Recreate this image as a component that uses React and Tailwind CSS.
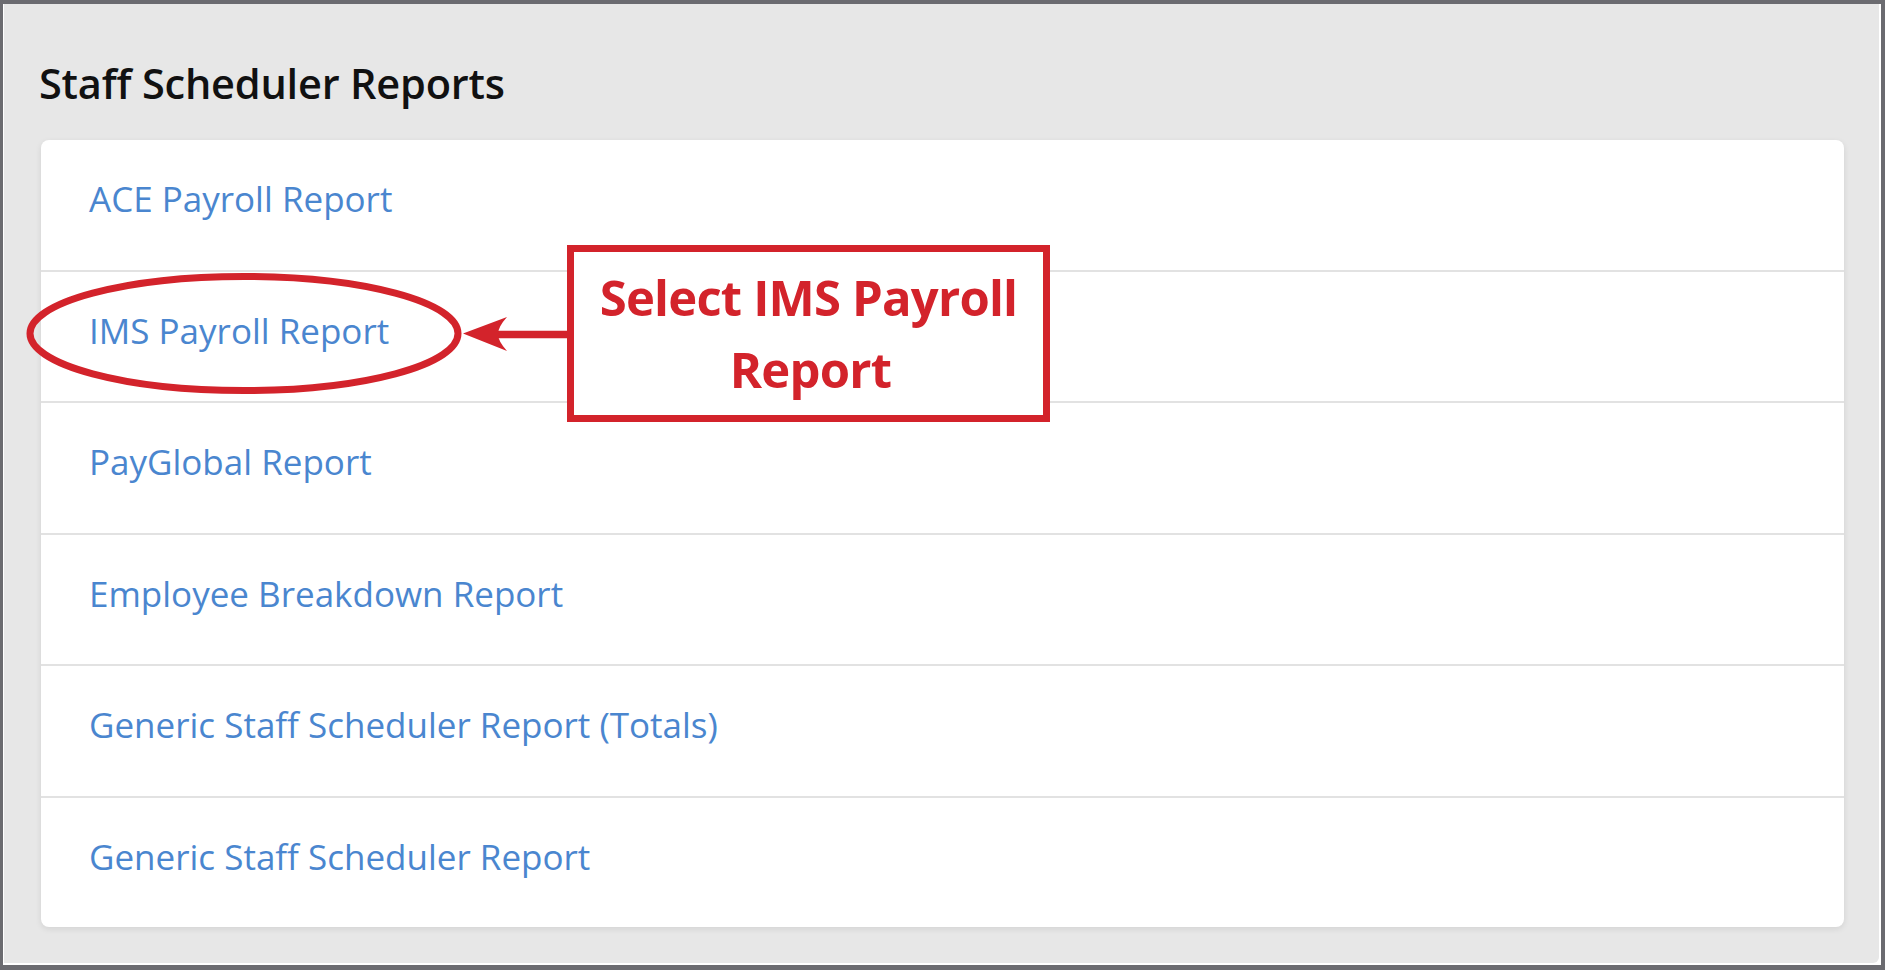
import React from "react";

const reports = [
  "ACE Payroll Report",
  "IMS Payroll Report",
  "PayGlobal Report",
  "Employee Breakdown Report",
  "Generic Staff Scheduler Report (Totals)",
  "Generic Staff Scheduler Report",
];

export default function App() {
  return (
    <div
      className="relative w-[1885px] h-[970px] bg-[#6b6b70] pt-[4px] pl-[3px] pr-[4px] pb-[5px] overflow-hidden"
      style={{ fontFamily: "'Open Sans', 'Noto Sans', sans-serif" }}
    >
      <div className="h-full bg-white pl-[1px] pr-[2px] pb-[2px]">
        <div className="h-full bg-[#e7e7e7] rounded-br-[6px] pl-[35px] pr-[35px] flex flex-col">
          <h1 className="mt-[55px] text-[41.5px] leading-[48px] font-semibold text-[#111] tracking-[-0.2px]">
            Staff Scheduler Reports
          </h1>
          <div className="mt-[33px] ml-[2px] h-[787px] bg-white rounded-[8px] shadow-[0_2px_6px_rgba(0,0,0,0.09)] flex flex-col overflow-hidden">
            {reports.map((r, i) => (
              <div
                key={r}
                className={
                  "flex-1 flex items-center pl-[48px] pb-[12px] " +
                  (i > 0 ? "border-t-2 border-[#e2e2e2]" : "")
                }
              >
                <a className="text-[35px] leading-[35px] text-[#4a86cf] cursor-pointer">
                  {r}
                </a>
              </div>
            ))}
          </div>
        </div>
      </div>

      <svg
        className="absolute left-0 top-0 pointer-events-none"
        width="1885"
        height="970"
        viewBox="0 0 1885 970"
      >
        <ellipse
          cx="244"
          cy="333.5"
          rx="214"
          ry="57"
          fill="none"
          stroke="#d3232b"
          strokeWidth="7"
        />
        <line x1="498" y1="334.5" x2="570" y2="334.5" stroke="#d3232b" strokeWidth="7.5" />
        <path
          d="M463 333.5 L507 317 Q498 327 498 334 Q498 341 507 351 Z"
          fill="#d3232b"
        />
      </svg>

      <div className="absolute left-[567px] top-[245px] w-[483px] h-[177px] bg-white border-[7px] border-[#d3232b] flex flex-col items-center pt-[9px]">
        <div className="text-[49px] leading-[72px] font-bold text-[#d3232b] tracking-[-0.8px] whitespace-nowrap">
          Select IMS Payroll
        </div>
        <div className="text-[49px] leading-[72px] font-bold text-[#d3232b] tracking-[-0.8px] whitespace-nowrap pl-[4px]">
          Report
        </div>
      </div>
    </div>
  );
}
